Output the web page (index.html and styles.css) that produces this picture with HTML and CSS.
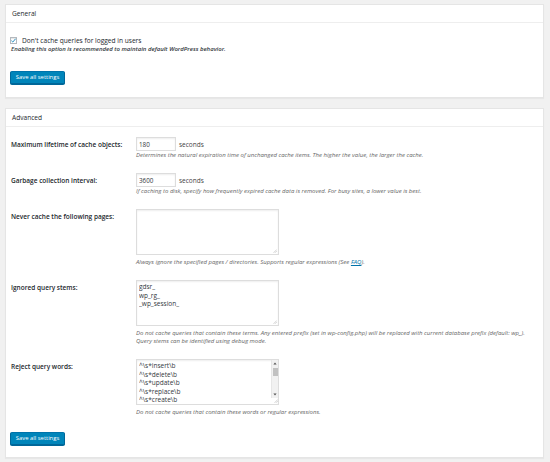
FILE: index.html
```html
<!DOCTYPE html>
<html lang="en">
<head>
<meta charset="utf-8">
<title>Cache settings</title>
<link rel="stylesheet" href="styles.css">
</head>
<body>
<div class="page">
  <section class="panel">
    <h3 class="panel-head">General</h3>
    <div class="panel-body general">
      <label class="check-row">
        <span class="checkbox"><svg viewBox="0 0 8 8" width="7" height="7"><path d="M1.6 4.2 L3.2 5.8 L6.4 2.0" fill="none" stroke="#1e8cbe" stroke-width="1.1"/></svg></span>
        <span>Don't cache queries for logged in users</span>
      </label>
      <p class="desc-strong">Enabling this option is recommended to maintain default WordPress behavior.</p>
      <button class="btn" type="button">Save all settings</button>
    </div>
  </section>

  <section class="panel">
    <h3 class="panel-head">Advanced</h3>
    <div class="panel-body advanced">
      <div class="form-row">
        <div class="label">Maximum lifetime of cache objects:</div>
        <div class="field">
          <div class="inline"><input class="num" type="text" value="180"><span class="unit">seconds</span></div>
          <p class="desc">Determines the natural expiration time of unchanged cache items. The higher the value, the larger the cache.</p>
        </div>
      </div>

      <div class="form-row">
        <div class="label">Garbage collection interval:</div>
        <div class="field">
          <div class="inline"><input class="num" type="text" value="3600"><span class="unit">seconds</span></div>
          <p class="desc">If caching to disk, specify how frequently expired cache data is removed. For busy sites, a lower value is best.</p>
        </div>
      </div>

      <div class="form-row">
        <div class="label">Never cache the following pages:</div>
        <div class="field">
          <div class="textarea">
            <div class="ta-lines"></div>
            <svg class="grip" viewBox="0 0 4 4" width="4" height="4"><path d="M0.5 3.8 L3.8 0.5 M2 3.8 L3.8 2" stroke="#aaa" stroke-width="0.5"/></svg>
          </div>
          <p class="desc ta-desc">Always ignore the specified pages / directories. Supports regular expressions (See <a href="#faq">FAQ</a>).</p>
        </div>
      </div>

      <div class="form-row">
        <div class="label">Ignored query stems:</div>
        <div class="field">
          <div class="textarea">
            <div class="ta-lines">
              <div>gdsr_</div>
              <div>wp_rg_</div>
              <div>_wp_session_</div>
            </div>
            <svg class="grip" viewBox="0 0 4 4" width="4" height="4"><path d="M0.5 3.8 L3.8 0.5 M2 3.8 L3.8 2" stroke="#aaa" stroke-width="0.5"/></svg>
          </div>
          <p class="desc ta-desc">Do not cache queries that contain these terms. Any entered prefix (set in wp-config.php) will be replaced with current database prefix (default: wp_).<br>Query stems can be identified using debug mode.</p>
        </div>
      </div>

      <div class="form-row">
        <div class="label">Reject query words:</div>
        <div class="field">
          <div class="textarea scroll">
            <div class="ta-lines">
              <div>^\s*insert\b</div>
              <div>^\s*delete\b</div>
              <div>^\s*update\b</div>
              <div>^\s*replace\b</div>
              <div>^\s*create\b</div>
            </div>
            <div class="sbar-col">
              <div class="sbar">
                <svg class="arrow" viewBox="0 0 4 3" width="4" height="3"><path d="M2 0.5 L3.6 2.6 L0.4 2.6 Z" fill="#505050"/></svg>
                <div class="thumb"></div>
                <div class="track"></div>
                <svg class="arrow" viewBox="0 0 4 3" width="4" height="3"><path d="M0.4 0.4 L3.6 0.4 L2 2.5 Z" fill="#505050"/></svg>
              </div>
              <svg class="grip" viewBox="0 0 4 4" width="4" height="4"><path d="M0.5 3.8 L3.8 0.5 M2 3.8 L3.8 2" stroke="#aaa" stroke-width="0.5"/></svg>
            </div>
          </div>
          <p class="desc ta-desc">Do not cache queries that contain these words or regular expressions.</p>
        </div>
      </div>

      <button class="btn" type="button">Save all settings</button>
    </div>
  </section>
</div>
</body>
</html>
```
FILE: styles.css
```css
* { box-sizing: border-box; }
html, body { margin: 0; }
body {
  background: #f1f1f1;
  font-family: "Open Sans", "Liberation Sans", sans-serif;
  color: #23282d;
  width: 550px;
  height: 462px;
  overflow: hidden;
}
.page {
  padding: 4px 6px 0 5px;
  display: flex;
  flex-direction: column;
  gap: 10px;
}
.panel {
  background: #fff;
  border: 1px solid #e5e5e5;
  box-shadow: 0 1px 1px rgba(0, 0, 0, 0.04);
}
.panel-head {
  margin: 0;
  height: 18px;
  border-bottom: 1px solid #eee;
  padding: 0 0 0 6px;
  font-size: 6.6px;
  font-weight: 400;
  line-height: 17px;
  color: #23282d;
}
.panel-body { padding: 13px 5px 13px 5px; }
.panel-body.advanced { padding: 10px 5px 12px 5px; display: flex; flex-direction: column; gap: 14px; }

.check-row {
  display: flex;
  align-items: center;
  gap: 5px;
  font-size: 6.6px;
  line-height: 9px;
  margin-left: -1px;
}
.checkbox {
  width: 7px;
  height: 7px;
  border: 1px solid #b4b9be;
  background: #fff;
  box-shadow: inset 0 1px 1px rgba(0,0,0,.1);
  display: flex;
  align-items: center;
  justify-content: center;
}
.checkbox svg { display: block; flex: none; }
.desc-strong {
  margin: 0;
  font-size: 6px;
  line-height: 8px;
  font-style: italic;
  font-weight: 600;
  color: #32373c;
}
.general .btn { margin-top: 18px; }

.btn {
  display: block;
  height: 13px;
  width: 55px;
  margin-left: -1px;
  padding: 0;
  background: #0085ba;
  border: 1px solid;
  border-color: #0073aa #006799 #006799;
  border-radius: 2px;
  box-shadow: 0 1px 0 #006799;
  color: #fff;
  font-family: "Open Sans", "Liberation Sans", sans-serif;
  font-size: 5.9px;
  line-height: 11px;
  text-align: center;
}
.advanced .btn { margin-top: 2px; }

.form-row {
  display: grid;
  grid-template-columns: 125px 1fr;
}
.label {
  font-size: 6.5px;
  font-weight: 600;
  line-height: 9px;
  padding-top: 2.5px;
  color: #23282d;
}
.inline { display: flex; align-items: center; }
.num {
  width: 40px;
  height: 14px;
  margin: 0;
  border: 1px solid #ddd;
  box-shadow: inset 0 1px 2px rgba(0,0,0,.07);
  padding: 0 2px;
  font-family: "Open Sans", "Liberation Sans", sans-serif;
  font-size: 6.3px;
  color: #32373c;
  background: #fff;
  outline: none;
}
.unit { margin-left: 3px; font-size: 6.5px; color: #444; }
.desc {
  margin: 0;
  font-size: 6px;
  line-height: 8px;
  font-style: italic;
  color: #666;
}
.ta-desc { margin-top: 3px; }
.desc a { color: #0073aa; text-decoration: underline; }

.textarea {
  width: 143px;
  height: 46px;
  border: 1px solid #ddd;
  box-shadow: inset 0 1px 2px rgba(0,0,0,.07);
  padding: 2px 2px;
  display: flex;
  flex-direction: column;
  font-size: 6.5px;
  line-height: 8.5px;
  color: #32373c;
  background: #fff;
}
.ta-lines { flex: 1; overflow: hidden; }
.grip { display: block; align-self: flex-end; margin: 0 -1px -1px 0; flex: none; }

.textarea.scroll {
  flex-direction: row;
  padding: 2px 0 0 2px;
}
.sbar-col {
  width: 7px;
  display: flex;
  flex-direction: column;
  margin-top: -2px;
}
.sbar {
  height: 38px;
  background: #f1f1f1;
  border-left: 1px solid #e6e6e6;
  display: flex;
  flex-direction: column;
  align-items: center;
  padding: 2px 0;
}
.arrow { display: block; flex: none; }
.thumb { width: 5px; height: 8px; background: #c1c1c1; margin-top: 3px; }
.track { flex: 1; }
.sbar-col .grip { margin: auto 0 1px 0; align-self: flex-end; }
```
